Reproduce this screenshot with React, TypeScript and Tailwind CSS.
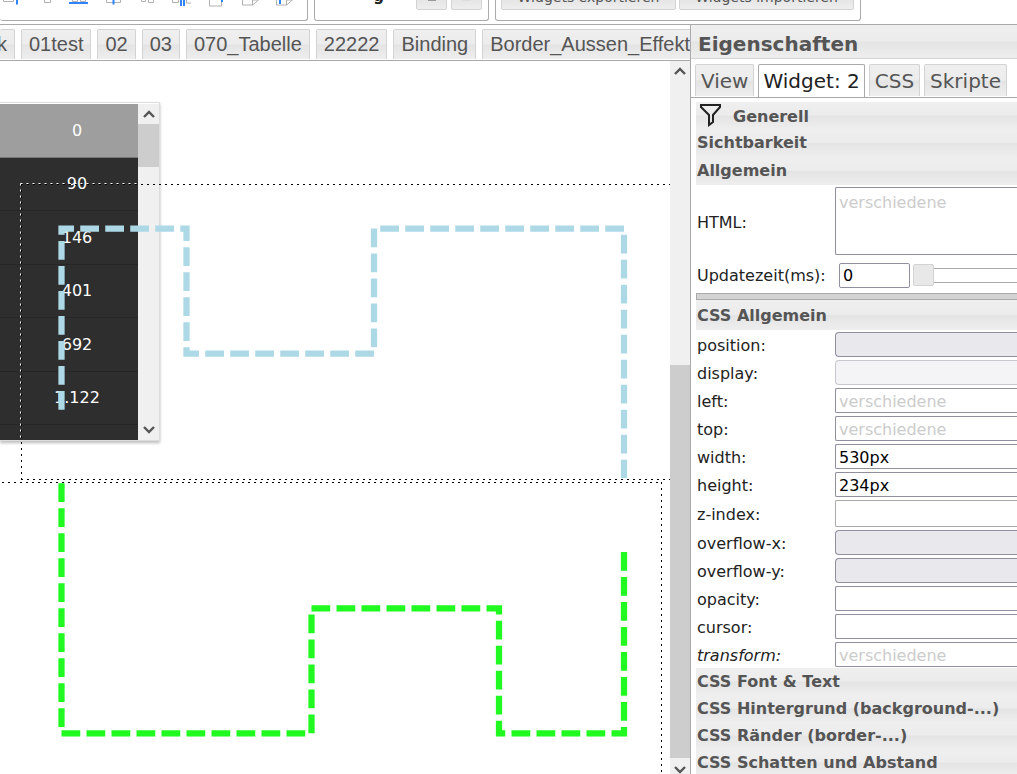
import React from "react";

const bar = "bg-[linear-gradient(#efefef_0,#ececec_48%,#e4e4e4_52%,#eeeeee_100%)]";
const tabBase = "shrink-0 whitespace-nowrap rounded-t-[2px] border border-b-0 border-[#d3d3d3] text-[#555] " + bar;

function ChevronUp() {
  return (
    <svg width="12" height="8" viewBox="0 0 12 8" aria-hidden="true">
      <path d="M1 7 6 2 11 7" fill="none" stroke="#555" strokeWidth="2.4" />
    </svg>
  );
}
function ChevronDown() {
  return (
    <svg width="12" height="8" viewBox="0 0 12 8" aria-hidden="true">
      <path d="M1 1 6 6 11 1" fill="none" stroke="#555" strokeWidth="2.4" />
    </svg>
  );
}

const alignIcons = [
  { grey: "M3.500 -2v3.500h10v-3.500", blue: "M17 -2v6.500" },
  { grey: "M10.500 -2v4.500h6v-4.500", blue: "" },
  { grey: "M4.500 -2v3.500h5v-3.500M12.500 -2v3.500h5v-3.500", blue: "M1 3h19" },
  { grey: "M4.500 -2v4.500h14v-4.500", blue: "M11.500 -2v6.500" },
  { grey: "M5.500 -2v3.500h4v-3.500M12.500 -2v4.500h5v-4.500", blue: "" },
  { grey: "M2.500 -2v4.500h6v-4.500M16.500 -2v5h6v-5", blue: "M11 -2v8M14 -2v8" },
  { grey: "M5.500 -2v8h12v-8", blue: "M18 -2v4" },
  { grey: "M4.500 -2v7h10l6-5v-2M14.500 5v-5h6", blue: "" },
  { grey: "M4.500 -2v7h10l6-5v-2M14.500 5v-5h6", blue: "M8 -2v6" },
];

function Toolbar() {
  return (
    <header className="flex h-6 shrink-0 items-start gap-1.5 overflow-hidden">
      <div className="flex h-[21px] w-[308px] shrink-0 items-start gap-[13px] rounded-b-[3px] border border-l-0 border-t-0 border-[#aaa]">
        {alignIcons.map((icon, i) => (
          <svg key={i} width="21" height="8" viewBox="0 0 21 8" className="shrink-0" aria-hidden="true">
            <path d={icon.grey} fill="none" stroke="#b0b0b0" />
            <path d={icon.blue} fill="none" stroke="#2f83fb" strokeWidth="2" />
          </svg>
        ))}
      </div>
      <div className="flex h-[21px] w-[175px] shrink-0 items-end justify-end gap-1 rounded-b-[3px] border border-t-0 border-[#aaa] pb-2.5">
        <span className="mb-1.5 h-4 w-[68px] pr-7 text-right font-['DejaVu_Sans',Verdana,sans-serif] text-[15px] font-bold leading-4 text-[#222]">g</span>
        <button aria-label="Kopieren" className={"flex h-6 w-[31px] items-end justify-center rounded-[2px] border border-[#d3d3d3] pb-2 " + bar}><i className="h-1 w-2 bg-[#999]" /></button>
        <button aria-label="Einfügen" className={"mr-1.5 flex h-6 w-[31px] items-end justify-center rounded-[2px] border border-[#d3d3d3] pb-2 " + bar}><i className="h-1 w-2 bg-[#ddd]" /></button>
      </div>
      <div className="flex h-[21px] w-[366px] shrink-0 items-end gap-[3px] rounded-b-[3px] border border-t-0 border-[#aaa] pb-2.5 pl-[5px] font-['DejaVu_Sans',Verdana,sans-serif] text-[14px] text-[#555]">
        <button className={"flex h-6 w-[175px] items-end justify-center rounded-[2px] border border-[#d3d3d3] pb-1 leading-4 " + bar}>Widgets exportieren</button>
        <button className={"flex h-6 w-[175px] items-end justify-center rounded-[2px] border border-[#d3d3d3] pb-1 leading-4 " + bar}>Widgets importieren</button>
      </div>
    </header>
  );
}

const views = ["k", "01test", "02", "03", "070_Tabelle", "22222", "Binding", "Border_Aussen_Effekt"];

function ViewTabs() {
  return (
    <nav className="flex h-[37px] shrink-0 items-end justify-start gap-1.5 overflow-hidden border-y border-[#aaa] pb-px font-['Liberation_Sans',Arial,sans-serif] text-[20px]">
      {views.map((v, i) => (
        <button key={v} className={tabBase + " h-[30px] pb-px leading-6 " + (i === 0 ? "w-[15px] border-l-0 pl-0 text-left -indent-[3px]" : "px-[7px]")}>{v}</button>
      ))}
    </nav>
  );
}

const counts = ["0", "90", "146", "401", "692", "1.122"];

function ValueTable() {
  return (
    <div className="absolute left-0 top-[41px] flex h-[339px] w-40 border border-l-0 border-[#ddd] pt-px shadow-[0_2px_3px_#bbb]">
      <div className="h-full flex-1 overflow-hidden bg-[#2e2e2e]">
        <table className="w-full border-separate border-spacing-0 font-['DejaVu_Sans',sans-serif] text-[16px] leading-5 text-white">
          <tbody>
            {counts.map((c, i) => (
              <tr key={c} className={i % 2 ? "h-[53px]" : i === 0 ? "h-[54px] bg-[#9e9e9e]" : "h-[54px]"}>
                <td className={"border-b p-0 pl-4 text-center " + (i === 0 ? "border-[#777]" : "border-[#262626]")}>{c}</td>
              </tr>
            ))}
          </tbody>
        </table>
      </div>
      <div className="flex w-[21px] flex-col items-center bg-[#f0f0f0]">
        <div className="flex h-5 items-center"><ChevronUp /></div>
        <div className="h-[43px] w-full bg-[#cdcdcd]" />
        <div className="mt-auto flex h-5 items-center"><ChevronDown /></div>
      </div>
    </div>
  );
}

function Workspace() {
  return (
    <div className="flex min-h-0 flex-1">
      <div className="relative min-w-0 flex-1 overflow-hidden bg-white">
        <ValueTable />
        <svg className="absolute left-0 top-0" width="670" height="713" viewBox="0 61 670 713" fill="none" aria-hidden="true">
          <g stroke="#fff">
            <path d="M20.5 183.5H138M20.5 183.5V441" strokeDasharray="2 4" />
          </g>
          <g stroke="#000">
            <path d="M21 184.5H670" strokeDasharray="2 4" />
            <path d="M21.5 184V480" strokeDasharray="2 4" />
            <path d="M21 479.5H670M2 482.5H662" strokeDasharray="2 4" />
            <path d="M661.5 482V774" strokeDasharray="2 4" />
          </g>
          <path d="M61.5 409.75V228.5H186.5V353.5H374V228.5H624V478" stroke="#add8e6" strokeWidth="6.25" strokeDasharray="18.75 6.25" />
          <path d="M61.5 483.25V733.25H311.5V608.25H499V733.25H624V551.5" stroke="#21fa21" strokeWidth="6.25" strokeDasharray="18.75 6.25" />
        </svg>
      </div>
      <div className="flex w-5 shrink-0 flex-col items-center bg-[#f0f0f0]">
        <div className="flex h-5 items-center"><ChevronUp /></div>
        <div className="mt-auto h-[393px] w-full bg-[#cdcdcd]" />
        <div className="flex h-4 items-end"><ChevronDown /></div>
      </div>
    </div>
  );
}

function Section({ title, size }: { title: string; size: string }) {
  return <h3 className={"flex shrink-0 items-center pl-px text-[16px] font-bold leading-5 text-[#555] " + size + " " + bar}>{title}</h3>;
}

type Field = { name: string; kind: string; value?: string };
const fields: Field[] = [
  { name: "position", kind: "select" },
  { name: "display", kind: "disabled" },
  { name: "left", kind: "mixed" },
  { name: "top", kind: "mixed" },
  { name: "width", kind: "text", value: "530px" },
  { name: "height", kind: "text", value: "234px" },
  { name: "z-index", kind: "spinner" },
  { name: "overflow-x", kind: "select" },
  { name: "overflow-y", kind: "select" },
  { name: "opacity", kind: "text" },
  { name: "cursor", kind: "text" },
  { name: "transform", kind: "mixed" },
];

function FieldRow({ field }: { field: Field }) {
  const spinner = field.kind === "spinner";
  const control = "min-w-0 flex-1 border border-r-0 " + (spinner ? "h-[27px] " : "h-[25px] ");
  const isSelect = field.kind === "select" || field.kind === "disabled";
  return (
    <div className={"flex items-end pb-px pl-px " + (spinner ? "h-[30px]" : "h-7")}>
      <label htmlFor={field.name} className={"w-[138px] shrink-0 " + (spinner ? "leading-[25px]" : "leading-[23px]") + (field.name === "transform" ? " italic" : "")}>{field.name}:</label>
      {isSelect ? (
        <select id={field.name} disabled={field.kind === "disabled"} className={control + "appearance-none rounded-l-[4px] opacity-100 " + (field.kind === "disabled" ? "border-[#c7c7ce] bg-[#f4f4f6]" : "border-[#8f8f9d] bg-[#e9e9ed]")} />
      ) : (
        <input id={field.name} defaultValue={field.value} placeholder={field.kind === "mixed" ? "verschiedene" : undefined} className={control + "rounded-l-[2px] bg-white pl-[3px] pt-px text-black placeholder:text-[#ccc] " + (spinner ? "border-[#aaa]" : "border-[#8f8f9d]")} />
      )}
    </div>
  );
}

function Properties() {
  return (
    <aside className="flex w-[327px] shrink-0 flex-col overflow-hidden border-l border-t border-[#aaa] bg-white font-['DejaVu_Sans',Verdana,sans-serif] text-[16px] text-[#222]">
      <h2 className={"flex h-[34px] shrink-0 items-center border-b border-[#d3d3d3] pl-[7px] pt-1 text-[20px] font-bold text-[#555] " + bar}>Eigenschaften</h2>
      <div className="flex h-[39px] shrink-0 items-end gap-1 border-b border-[#aaa] pl-1 text-[20px]">
        <button className={tabBase + " mb-px h-8 px-[5px]"}>View</button>
        <button className="h-[33px] rounded-t-[2px] border border-b-0 border-[#aaa] bg-white px-1 text-[#212121]">Widget: 2</button>
        <button className={tabBase + " mb-px h-8 px-[5px]"}>CSS</button>
        <button className={tabBase + " mb-px h-8 px-[5px]"}>Skripte</button>
      </div>
      <div className="flex flex-col pl-[5px] pt-1">
        <div className={"flex h-[27px] items-center gap-[11px] pl-1 " + bar}>
          <svg width="22" height="24" viewBox="0 0 22 24" fill="none" stroke="#222" strokeWidth="2" aria-hidden="true">
            <path d="M1 1H20V3L13 11V18L9 21V11L1 3Z" />
          </svg>
          <h3 className="pt-0.5 font-bold leading-5 text-[#555]">Generell</h3>
        </div>
        <Section title="Sichtbarkeit" size="h-7" />
        <Section title="Allgemein" size="h-7" />
        <div className="flex h-[72px] items-center pl-px">
          <label htmlFor="html" className="w-[138px] shrink-0 pt-1">HTML:</label>
          <textarea id="html" placeholder="verschiedene" className="h-[68px] min-w-0 flex-1 resize-none rounded-l-[2px] border border-r-0 border-[#8f8f9d] pl-[3px] pt-[3px] placeholder:text-[#ccc]" />
        </div>
        <div className="flex h-9 items-center pl-px">
          <label htmlFor="interval" className="w-[142px] shrink-0 pt-0.5">Updatezeit(ms):</label>
          <input id="interval" defaultValue="0" className="h-[25px] w-[71px] rounded-[2px] border border-[#8f8f9d] pl-[3px] pt-px text-black" />
          <input type="range" aria-label="Updatezeit" defaultValue="0" className="ml-[3px] h-[15px] min-w-0 flex-1 appearance-none border-y border-[#aaa] [&::-webkit-slider-thumb]:h-[22px] [&::-webkit-slider-thumb]:w-[21px] [&::-webkit-slider-thumb]:appearance-none [&::-webkit-slider-thumb]:rounded-[2px] [&::-webkit-slider-thumb]:border [&::-webkit-slider-thumb]:border-[#d3d3d3] [&::-webkit-slider-thumb]:bg-[#e8e8e8]" />
        </div>
        <div className="h-[7px] border border-r-0 border-[#aaa] bg-[#d3d3d3]" />
        <Section title="CSS Allgemein" size="h-[30px] pt-0.5" />
        {fields.map((f) => <FieldRow key={f.name} field={f} />)}
        <Section title="CSS Font & Text" size="h-[27px]" />
        <Section title="CSS Hintergrund (background-...)" size="h-[27px]" />
        <Section title="CSS Ränder (border-...)" size="h-[27px]" />
        <Section title="CSS Schatten und Abstand" size="h-[27px]" />
      </div>
    </aside>
  );
}

export default function App() {
  return (
    <div className="flex h-screen flex-col overflow-hidden bg-white">
      <Toolbar />
      <div className="flex min-h-0 flex-1">
        <main className="flex min-w-0 flex-1 flex-col">
          <ViewTabs />
          <Workspace />
        </main>
        <Properties />
      </div>
    </div>
  );
}
